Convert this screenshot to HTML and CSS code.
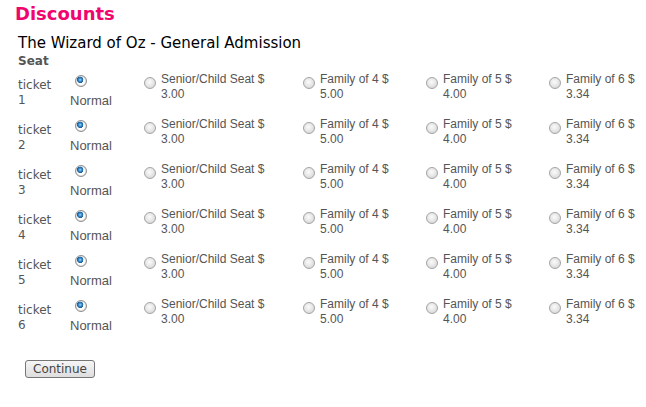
FILE: index.html
```html
<!DOCTYPE html>
<html>
<head>
<meta charset="utf-8">
<link rel="stylesheet" href="styles.css">
</head>
<body>
<div class="page">
  <h1 class="heading">Discounts</h1>
  <div class="show-title">The Wizard of Oz - General Admission</div>
  <div class="seat-head">Seat</div>
  <div class="rows">
    <div class="row">
      <div class="ticket">ticket<br>1</div>
      <label class="normal"><input type="radio" name="t1" checked><span>Normal</span></label>
      <label class="opt"><input type="radio" name="t1"><span>Senior/Child Seat $<br>3.00</span></label>
      <label class="opt"><input type="radio" name="t1"><span>Family of 4 $<br>5.00</span></label>
      <label class="opt"><input type="radio" name="t1"><span>Family of 5 $<br>4.00</span></label>
      <label class="opt"><input type="radio" name="t1"><span>Family of 6 $<br>3.34</span></label>
    </div>
    <div class="row">
      <div class="ticket">ticket<br>2</div>
      <label class="normal"><input type="radio" name="t2" checked><span>Normal</span></label>
      <label class="opt"><input type="radio" name="t2"><span>Senior/Child Seat $<br>3.00</span></label>
      <label class="opt"><input type="radio" name="t2"><span>Family of 4 $<br>5.00</span></label>
      <label class="opt"><input type="radio" name="t2"><span>Family of 5 $<br>4.00</span></label>
      <label class="opt"><input type="radio" name="t2"><span>Family of 6 $<br>3.34</span></label>
    </div>
    <div class="row">
      <div class="ticket">ticket<br>3</div>
      <label class="normal"><input type="radio" name="t3" checked><span>Normal</span></label>
      <label class="opt"><input type="radio" name="t3"><span>Senior/Child Seat $<br>3.00</span></label>
      <label class="opt"><input type="radio" name="t3"><span>Family of 4 $<br>5.00</span></label>
      <label class="opt"><input type="radio" name="t3"><span>Family of 5 $<br>4.00</span></label>
      <label class="opt"><input type="radio" name="t3"><span>Family of 6 $<br>3.34</span></label>
    </div>
    <div class="row">
      <div class="ticket">ticket<br>4</div>
      <label class="normal"><input type="radio" name="t4" checked><span>Normal</span></label>
      <label class="opt"><input type="radio" name="t4"><span>Senior/Child Seat $<br>3.00</span></label>
      <label class="opt"><input type="radio" name="t4"><span>Family of 4 $<br>5.00</span></label>
      <label class="opt"><input type="radio" name="t4"><span>Family of 5 $<br>4.00</span></label>
      <label class="opt"><input type="radio" name="t4"><span>Family of 6 $<br>3.34</span></label>
    </div>
    <div class="row">
      <div class="ticket">ticket<br>5</div>
      <label class="normal"><input type="radio" name="t5" checked><span>Normal</span></label>
      <label class="opt"><input type="radio" name="t5"><span>Senior/Child Seat $<br>3.00</span></label>
      <label class="opt"><input type="radio" name="t5"><span>Family of 4 $<br>5.00</span></label>
      <label class="opt"><input type="radio" name="t5"><span>Family of 5 $<br>4.00</span></label>
      <label class="opt"><input type="radio" name="t5"><span>Family of 6 $<br>3.34</span></label>
    </div>
    <div class="row">
      <div class="ticket">ticket<br>6</div>
      <label class="normal"><input type="radio" name="t6" checked><span>Normal</span></label>
      <label class="opt"><input type="radio" name="t6"><span>Senior/Child Seat $<br>3.00</span></label>
      <label class="opt"><input type="radio" name="t6"><span>Family of 4 $<br>5.00</span></label>
      <label class="opt"><input type="radio" name="t6"><span>Family of 5 $<br>4.00</span></label>
      <label class="opt"><input type="radio" name="t6"><span>Family of 6 $<br>3.34</span></label>
    </div>
  </div>
  <div class="actions"><button class="continue" type="button">Continue</button></div>
</div>
</body>
</html>
```

FILE: styles.css
```css
html, body {
  margin: 0;
  padding: 0;
  background: #ffffff;
}
.page {
  padding: 3px 0 0 18px;
  font-family: "DejaVu Sans", Verdana, sans-serif;
}
.heading {
  margin: 0 0 0 -3px;
  font-family: "DejaVu Sans", Verdana, sans-serif;
  font-size: 18px;
  line-height: 22px;
  font-weight: bold;
  color: #f0056e;
}
.show-title {
  margin-top: 9px;
  font-size: 15px;
  line-height: 18px;
  color: #000;
}
.seat-head {
  margin-top: 3px;
  font-size: 12px;
  line-height: 13px;
  font-weight: bold;
  color: #555;
}
.rows {
  margin-top: 4px;
}
.row {
  display: grid;
  grid-template-columns: 52px 74px 159px 123px 123px 1fr;
  height: 45px;
  align-items: start;
}
.ticket {
  padding-top: 6px;
  font-size: 12px;
  line-height: 15px;
  color: #555;
}
.normal {
  display: flex;
  flex-direction: column;
  align-items: flex-start;
  font-family: "Liberation Sans", Arial, sans-serif;
  font-size: 13px;
  line-height: 15px;
  color: #555;
}
.normal input {
  margin: 3px 0 6px 5px;
}
.opt {
  display: flex;
  align-items: flex-start;
  font-family: "Liberation Sans", Arial, sans-serif;
  font-size: 12px;
  line-height: 15px;
  color: #555;
}
.opt input {
  margin: 5px 5px 0 0;
  flex: none;
}
input[type="radio"] {
  -webkit-appearance: none;
  appearance: none;
  width: 12px;
  height: 12px;
  box-sizing: border-box;
  border-radius: 50%;
  border: 1px solid #a4a4a4;
  background: radial-gradient(circle at 45% 40%, #fbfbfb 0%, #e8e8e8 45%, #cdcdcd 100%);
  display: block;
}
input[type="radio"]:checked {
  border-color: #8f8f8f;
  background:
    radial-gradient(circle at 42% 38%, #a8d8f7 0px, #3a90d2 1.5px, #1a5f9a 3px, transparent 3.4px),
    radial-gradient(circle, #ffffff 3.5px, #dadada 5px, #c0c0c0 6px);
}
.actions {
  margin-top: 16px;
  padding-left: 7px;
}
.continue {
  font-family: "DejaVu Sans", Verdana, sans-serif;
  font-size: 12px;
  line-height: 14px;
  height: 18px;
  padding: 0 7px;
  margin: 0;
  color: #444;
  border: 1px solid #767676;
  border-radius: 3px;
  background: linear-gradient(#f6f6f6, #dedede);
}
```
